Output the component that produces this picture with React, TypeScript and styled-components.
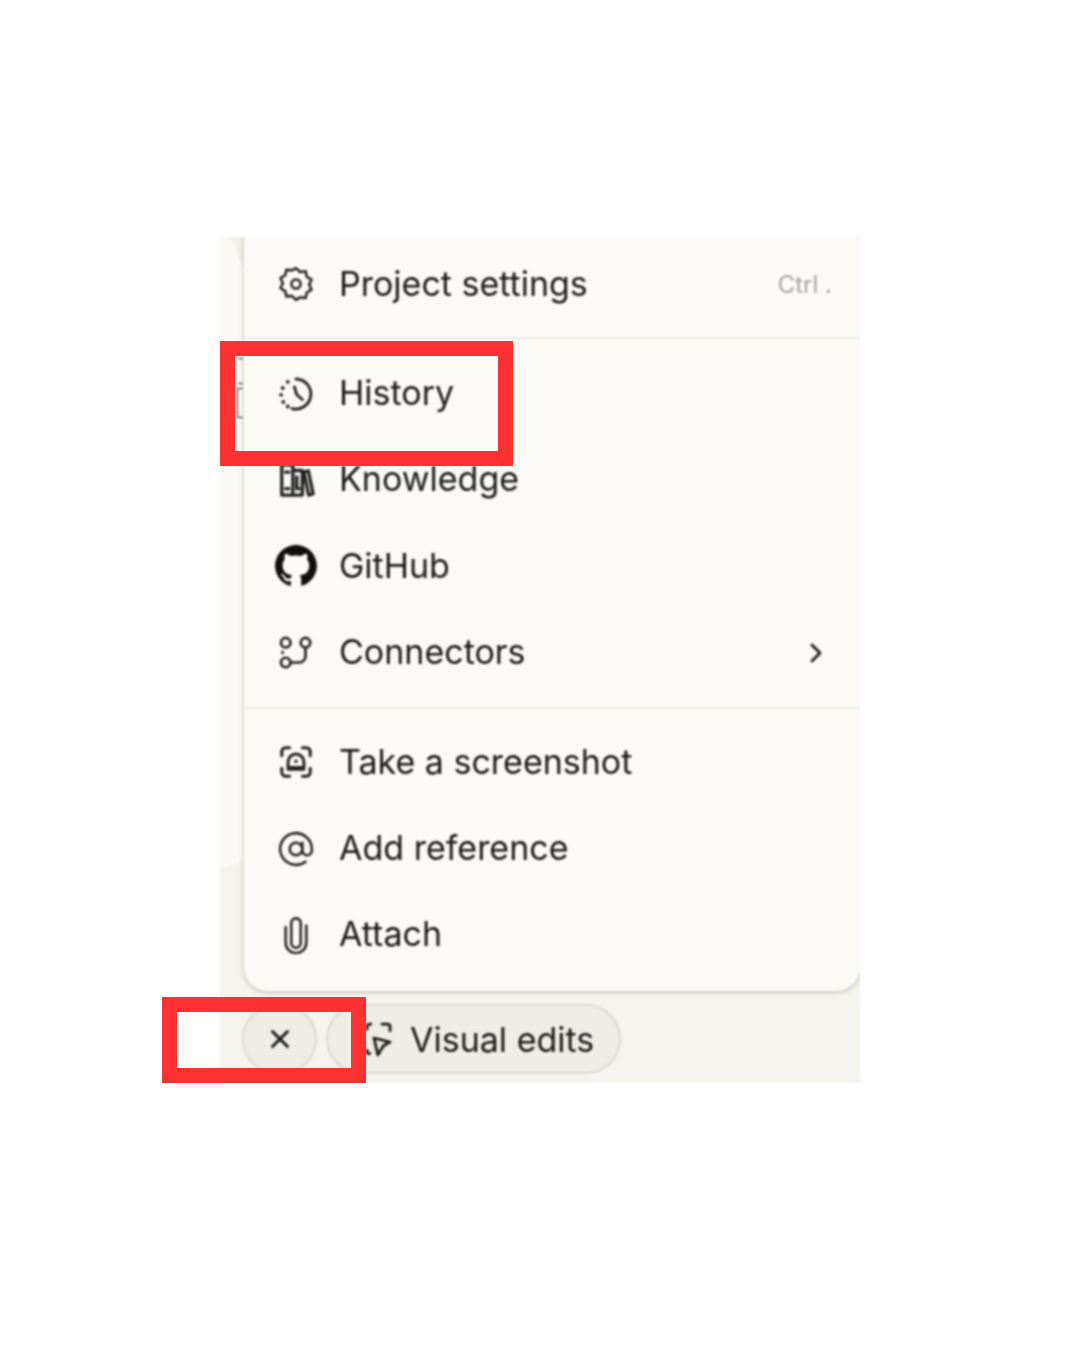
import styled, { createGlobalStyle } from "styled-components";
import { ChevronRight, X } from "lucide-react";
import type { ReactNode } from "react";

const GlobalStyle = createGlobalStyle`
  html, body {
    margin: 0;
    padding: 0;
    background: #ffffff;
  }
  body {
    font-family: Inter, "Liberation Sans", sans-serif;
  }
`;

const Page = styled.div`
  position: relative;
  width: 1080px;
  height: 1350px;
  padding: 237px 0 0 220px;
  box-sizing: border-box;
  overflow: hidden;
`;

const Shot = styled.div`
  position: relative;
  width: 640px;
  height: 846px;
  background: #f5f3ed;
  overflow: hidden;
  filter: blur(0.8px);
`;

/* the card behind the menu, only its left edge shows */
const BackCard = styled.div`
  position: absolute;
  left: -20px;
  top: 0;
  width: 60px;
  height: 630px;
  background: #faf9f5;
  border-bottom-right-radius: 40px;
`;

const BackNotch = styled.div`
  position: absolute;
  left: 11px;
  top: 0;
  width: 24px;
  height: 30px;
  background: #f1efe9;
  clip-path: polygon(0 0, 100% 0, 50% 100%);
`;

const BackBracket = styled.div`
  position: absolute;
  left: 17px;
  top: 151px;
  width: 5px;
  height: 28px;
  border: solid #2c2c28;
  border-width: 1px 0 1px 1px;
`;

const BackTick = styled.div<{ $top: number }>`
  position: absolute;
  left: 18px;
  top: ${(p) => p.$top}px;
  width: 5px;
  height: 1px;
  background: #2c2c28;
`;

const Menu = styled.div`
  position: relative;
  width: 616px;
  height: 754px;
  margin-left: 24px;
  box-sizing: border-box;
  background: #fbfaf6;
  border-radius: 4px 4px 24px 24px;
  box-shadow: 0 1px 5px rgba(70, 60, 40, 0.32);
`;

const Group = styled.div<{ $top: number; $bottom: number; $line?: boolean }>`
  padding: ${(p) => p.$top}px 0 ${(p) => p.$bottom}px;
  border-bottom: ${(p) => (p.$line ? "2px solid #ebe9e3" : "none")};
`;

const Row = styled.div`
  display: flex;
  align-items: center;
  height: 86.4px;
  padding: 0 28px 0 30px;
  box-sizing: border-box;
`;

const IconSlot = styled.span`
  display: flex;
  align-items: center;
  justify-content: center;
  width: 44px;
  height: 44px;
  margin-right: 21px;
  color: #232321;
`;

const Label = styled.span`
  flex: 1;
  font-size: 34px;
  line-height: 40px;
  margin-top: -1px;
  color: #1a1a18;
  white-space: nowrap;
`;

const Hint = styled.span`
  font-size: 24px;
  color: #a3a29e;
`;

const Bar = styled.div`
  position: relative;
  display: flex;
  align-items: center;
  gap: 9px;
  padding: 13px 0 0 22px;
`;

const Chip = styled.div`
  display: flex;
  align-items: center;
  justify-content: center;
  height: 70px;
  box-sizing: border-box;
  border: 2px solid #dcdad3;
  border-radius: 35px;
  background: #efede6;
  color: #1a1a18;
`;

const CloseChip = styled(Chip)`
  width: 75px;
`;

const EditsChip = styled(Chip)`
  padding: 0 25px 0 36px;
  gap: 10px;
  font-size: 34px;
`;

const Callout = styled.div<{ $x: number; $y: number; $w: number; $h: number }>`
  position: absolute;
  left: ${(p) => p.$x}px;
  top: ${(p) => p.$y}px;
  width: ${(p) => p.$w}px;
  height: ${(p) => p.$h}px;
  box-sizing: border-box;
  border: 15px solid #fd3131;
`;

const Glyph = ({ children, weight = 1.6 }: { children: ReactNode; weight?: number }) => (
  <svg
    width="38"
    height="38"
    viewBox="0 0 24 24"
    fill="none"
    stroke="currentColor"
    strokeWidth={weight}
    strokeLinecap="round"
    strokeLinejoin="round"
  >
    {children}
  </svg>
);

const GearIcon = () => (
  <Glyph>
    <path d="M12 2l2.600 2.400 3.500-.4.7 3.400 3 1.800-1.500 3.200 1.500 3.200-3 1.800-.7 3.400-3.500-.4L12 22l-2.600-2.500-3.500.4-.7-3.400-3-1.800L3.700 11.500 2.200 8.200l3-1.800.7-3.400 3.500.4z" />
    <circle cx="12" cy="12" r="2.900" />
  </Glyph>
);

const HistoryIcon = () => (
  <Glyph weight={1.8}>
    <path d="M12 2.500a9.500 9.500 0 1 1-2.500 18.700" />
    <path d="M11 7.500l1.500 5 3.500 3" />
    <path d="M6.800 4.300v.01M3.600 8.200v.01M2.600 12.500v.01M4 17v.01M6.800 19.900v.01" strokeWidth="2.400" />
  </Glyph>
);

const BooksIcon = () => (
  <Glyph weight={2.1}>
    <path d="M3 21.500V2.500h7v19zM10 21.500V6h6v15.500zM3 21.500h13" />
    <path d="M5.500 17.500h2M5.500 7h2M12.500 10v7.500M12.500 17.500h1.500" />
    <path d="M17 7l2.800-.8 3 14.500-2.800.8z" />
  </Glyph>
);

const GithubIcon = () => (
  <svg width="44" height="44" viewBox="0 0 24 24" fill="#0f0f0e">
    <path d="M12 .6C5.700.6.600 5.700.600 12c0 5 3.300 9.300 7.800 10.800.6.1.8-.2.8-.5v-2.100c-3.200.7-3.800-1.400-3.800-1.400-.5-1.300-1.300-1.700-1.300-1.700-1-.7.1-.7.1-.7 1.100.1 1.700 1.200 1.700 1.200 1 1.800 2.700 1.300 3.300 1 .1-.8.4-1.300.7-1.600-2.500-.3-5.200-1.300-5.200-5.600 0-1.200.4-2.200 1.200-3-.1-.3-.5-1.500.1-3 0 0 1-.3 3.100 1.200a10.800 10.800 0 0 1 5.700 0c2.200-1.500 3.100-1.200 3.100-1.200.6 1.500.2 2.700.1 3 .7.800 1.200 1.800 1.200 3 0 4.400-2.700 5.300-5.200 5.600.4.300.8 1 .8 2.100v3.100c0 .3.2.6.800.5A11.400 11.400 0 0 0 23.400 12C23.400 5.700 18.300.6 12 .6z" />
  </svg>
);

const ConnectorsIcon = () => (
  <Glyph weight={1.7}>
    <circle cx="5.500" cy="5.500" r="3" />
    <circle cx="18" cy="5.500" r="3" />
    <circle cx="5.500" cy="18" r="3" />
    <path d="M8.500 18h5.500a4 4 0 0 0 4-4V8.500" />
    <path d="M3.500 11.500v.5" />
  </Glyph>
);

const ScreenshotIcon = () => (
  <Glyph weight={1.9}>
    <path d="M3 8V5.500A2.500 2.500 0 0 1 5.500 3H8M16 3h2.500A2.500 2.500 0 0 1 21 5.500V8M21 16v2.500a2.500 2.500 0 0 1-2.500 2.500H16M8 21H5.500A2.500 2.500 0 0 1 3 18.500V16" />
    <path d="M7 16.500V12a5 5 0 0 1 10 0v4.500z" />
    <path d="M8 15.500h8" strokeWidth="2" />
    <path d="M12 11.500v.01" strokeWidth="2.200" />
  </Glyph>
);

const AtIcon = () => (
  <Glyph>
    <circle cx="12" cy="12" r="4" />
    <path d="M16 8v5a3 3 0 0 0 6 0v-1a10 10 0 1 0-4 8" />
  </Glyph>
);

const AttachIcon = () => (
  <Glyph>
    <path d="M9 17V4.500a3 3 0 0 1 6 0V17a3 3 0 0 1-6 0z" />
    <path d="M5.500 7v10a6.500 6.500 0 0 0 13 0V6" />
  </Glyph>
);

const VisualEditsIcon = () => (
  <svg width="36" height="36" viewBox="0 0 26 26" fill="none" stroke="currentColor" strokeWidth="2" strokeLinecap="round" strokeLinejoin="round">
    <path d="M2.200 6V4A1.800 1.800 0 0 1 4 2.200h1M13 2.200h4A1.800 1.800 0 0 1 18.800 4v3M2.200 21v1.500a1 1 0 0 0 1 1h1" />
    <path d="M7.200 12.300l11.600 2.900-4.800 2.700L10 24.500z" />
  </svg>
);

const App = () => {
  return (
    <Page>
      <GlobalStyle />
      <Shot>
        <BackCard />
        <BackNotch />
        <BackTick $top={121} />
        <BackTick $top={146} />
        <BackBracket />
        <Menu>
          <Group $top={4} $bottom={10} $line>
            <Row>
              <IconSlot><GearIcon /></IconSlot>
              <Label>Project settings</Label>
              <Hint>Ctrl .</Hint>
            </Row>
          </Group>
          <Group $top={11} $bottom={11} $line>
            <Row>
              <IconSlot><HistoryIcon /></IconSlot>
              <Label>History</Label>
            </Row>
            <Row>
              <IconSlot><BooksIcon /></IconSlot>
              <Label>Knowledge</Label>
            </Row>
            <Row>
              <IconSlot><GithubIcon /></IconSlot>
              <Label>GitHub</Label>
            </Row>
            <Row>
              <IconSlot><ConnectorsIcon /></IconSlot>
              <Label>Connectors</Label>
              <ChevronRight size={32} strokeWidth={2.2} color="#232321" />
            </Row>
          </Group>
          <Group $top={10} $bottom={13}>
            <Row>
              <IconSlot><ScreenshotIcon /></IconSlot>
              <Label>Take a screenshot</Label>
            </Row>
            <Row>
              <IconSlot><AtIcon /></IconSlot>
              <Label>Add reference</Label>
            </Row>
            <Row>
              <IconSlot><AttachIcon /></IconSlot>
              <Label>Attach</Label>
            </Row>
          </Group>
        </Menu>
        <Bar>
          <CloseChip><X size={30} strokeWidth={2.4} /></CloseChip>
          <EditsChip>
            <VisualEditsIcon />
            Visual edits
          </EditsChip>
        </Bar>
      </Shot>
      <Callout $x={220} $y={341} $w={293} $h={125} />
      <Callout $x={162} $y={997} $w={204} $h={86} />
    </Page>
  );
};

export default App;
